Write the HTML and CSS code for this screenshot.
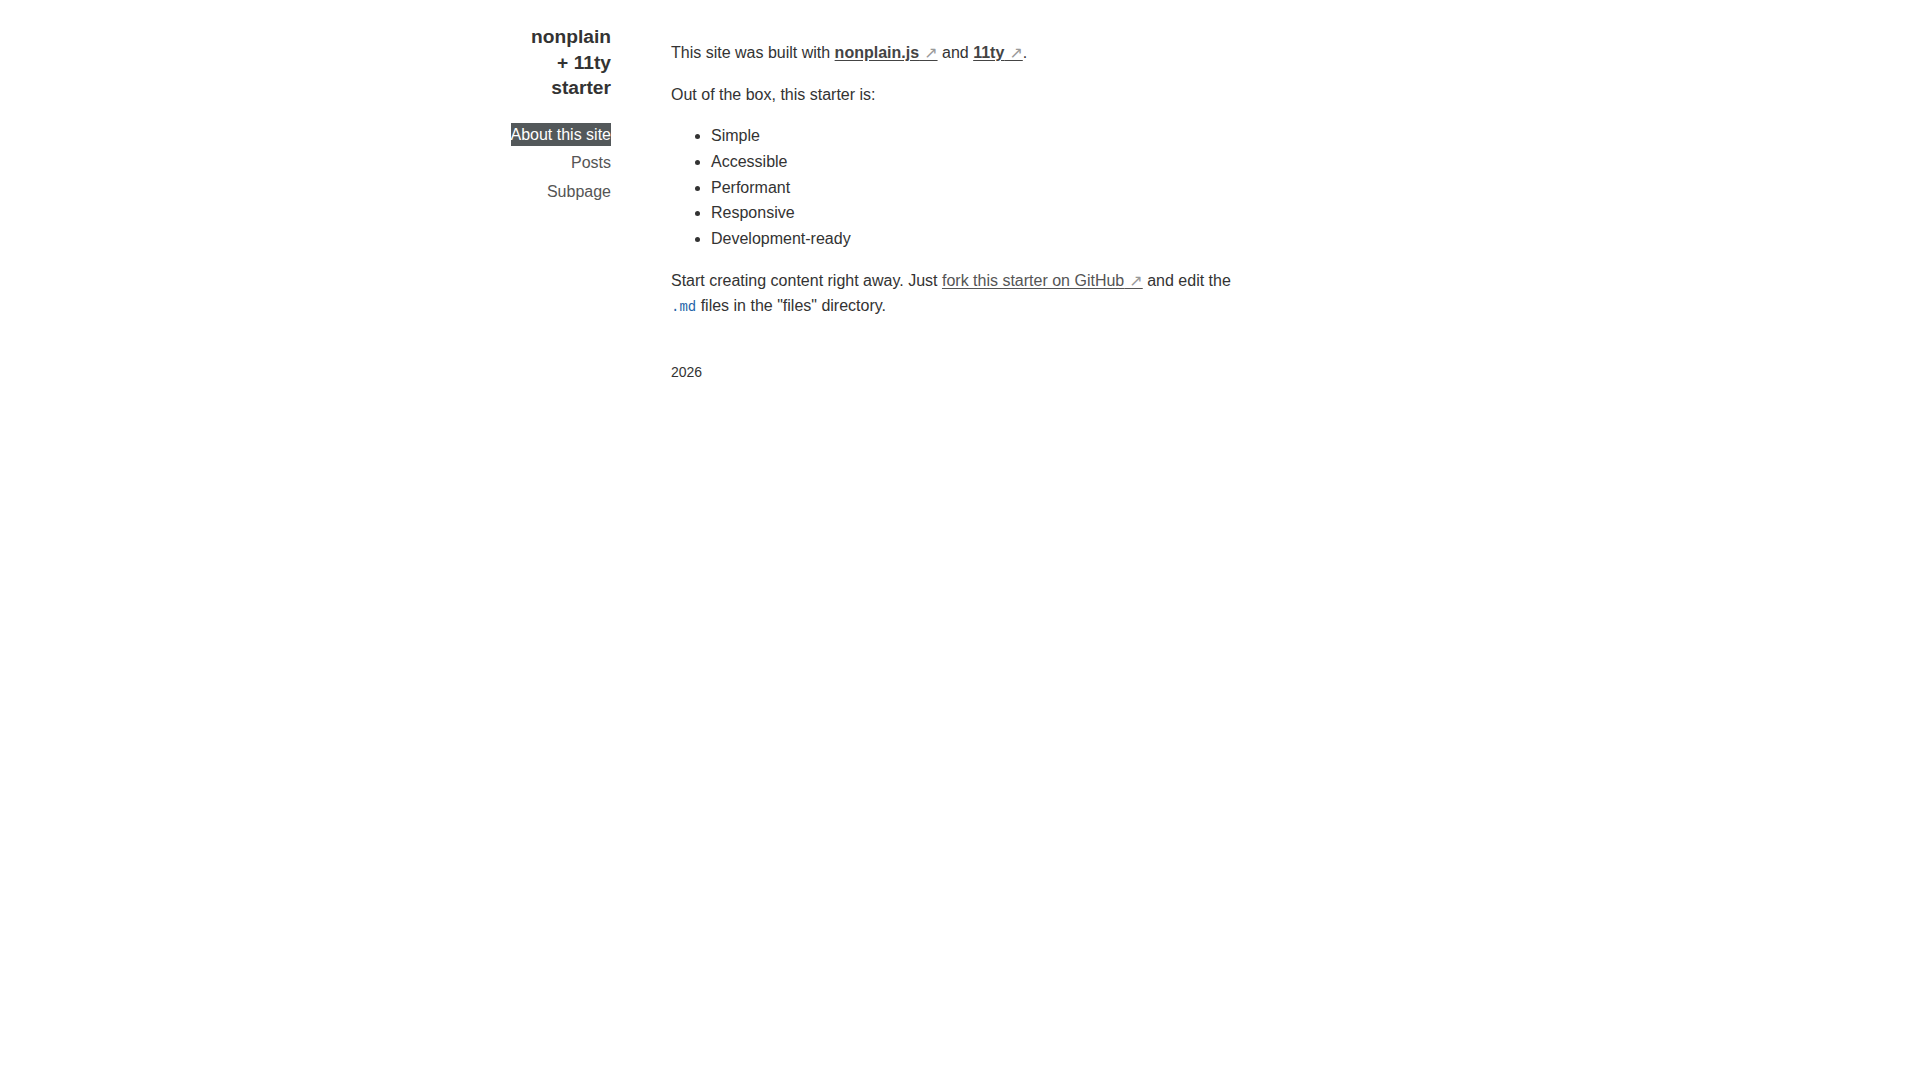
FILE: index.html
```html
<!DOCTYPE html>
<html lang="en">
<head>
<meta charset="utf-8">
<title>About this site — nonplain + 11ty starter</title>
<link rel="stylesheet" href="styles.css">
</head>
<body>
<div class="page">
  <header class="sidebar">
    <h1 class="site-title">nonplain<br>+ 11ty<br>starter</h1>
    <nav class="nav">
      <a class="nav-item active" href="#">About this site</a>
      <a class="nav-item" href="#">Posts</a>
      <a class="nav-item" href="#">Subpage</a>
    </nav>
  </header>
  <div class="main-col">
    <main class="content">
      <p>This site was built with <strong><a class="ext" href="#">nonplain.js</a></strong> and <strong><a class="ext" href="#">11ty</a></strong>.</p>
      <p>Out of the box, this starter is:</p>
      <ul class="features">
        <li>Simple</li>
        <li>Accessible</li>
        <li>Performant</li>
        <li>Responsive</li>
        <li>Development-ready</li>
      </ul>
      <p class="last">Start creating content right away. Just <a class="ext" href="#">fork this starter on GitHub</a> and edit the <code>.md</code> files in the "files" directory.</p>
    </main>
    <footer class="footer">2026</footer>
  </div>
</div>
</body>
</html>
```
FILE: styles.css
```css
html, body {
  margin: 0;
  padding: 0;
  background: #ffffff;
}

body {
  font-family: "Liberation Sans", Arial, sans-serif;
  font-size: 16px;
  line-height: 25.6px;
  color: #333333;
}

.page {
  display: flex;
  align-items: flex-start;
  gap: 60px;
  padding: 24px 0 0 451px;
}

.sidebar {
  width: 160px;
  display: flex;
  flex-direction: column;
  align-items: flex-end;
  text-align: right;
}

.site-title {
  margin: 0;
  font-size: 19.2px;
  line-height: 25.7px;
  font-weight: 700;
  color: #333333;
}

.nav {
  margin-top: 22px;
  display: flex;
  flex-direction: column;
  align-items: flex-end;
  gap: 5px;
}

.nav-item {
  display: block;
  line-height: 23px;
  color: #555555;
  text-decoration: none;
}

.nav-item:last-child {
  margin-top: 1px;
}

.nav-item.active {
  background: #53585a;
  color: #ffffff;
}

.main-col {
  width: 576px;
}

.content p {
  margin: 16px 0;
}

.content p.last {
  margin-top: 15px;
}

.content strong a {
  font-weight: 700;
  color: #444444;
}

.content a {
  color: #555555;
  text-decoration: underline;
  text-underline-offset: 2px;
}

.content a.ext::after {
  content: "\00a0\2197";
  font-family: "DejaVu Sans", sans-serif;
  font-weight: 400;
  color: #9a9a9a;
}

.features {
  margin: 16px 0;
  padding-left: 40px;
}

.features li {
  line-height: 25.7px;
}

code {
  font-family: "Liberation Mono", "DejaVu Sans Mono", monospace;
  font-size: 14px;
  color: #2563a8;
}

.footer {
  margin-top: 40px;
  font-size: 14px;
  line-height: 22.4px;
  color: #333333;
}
```
